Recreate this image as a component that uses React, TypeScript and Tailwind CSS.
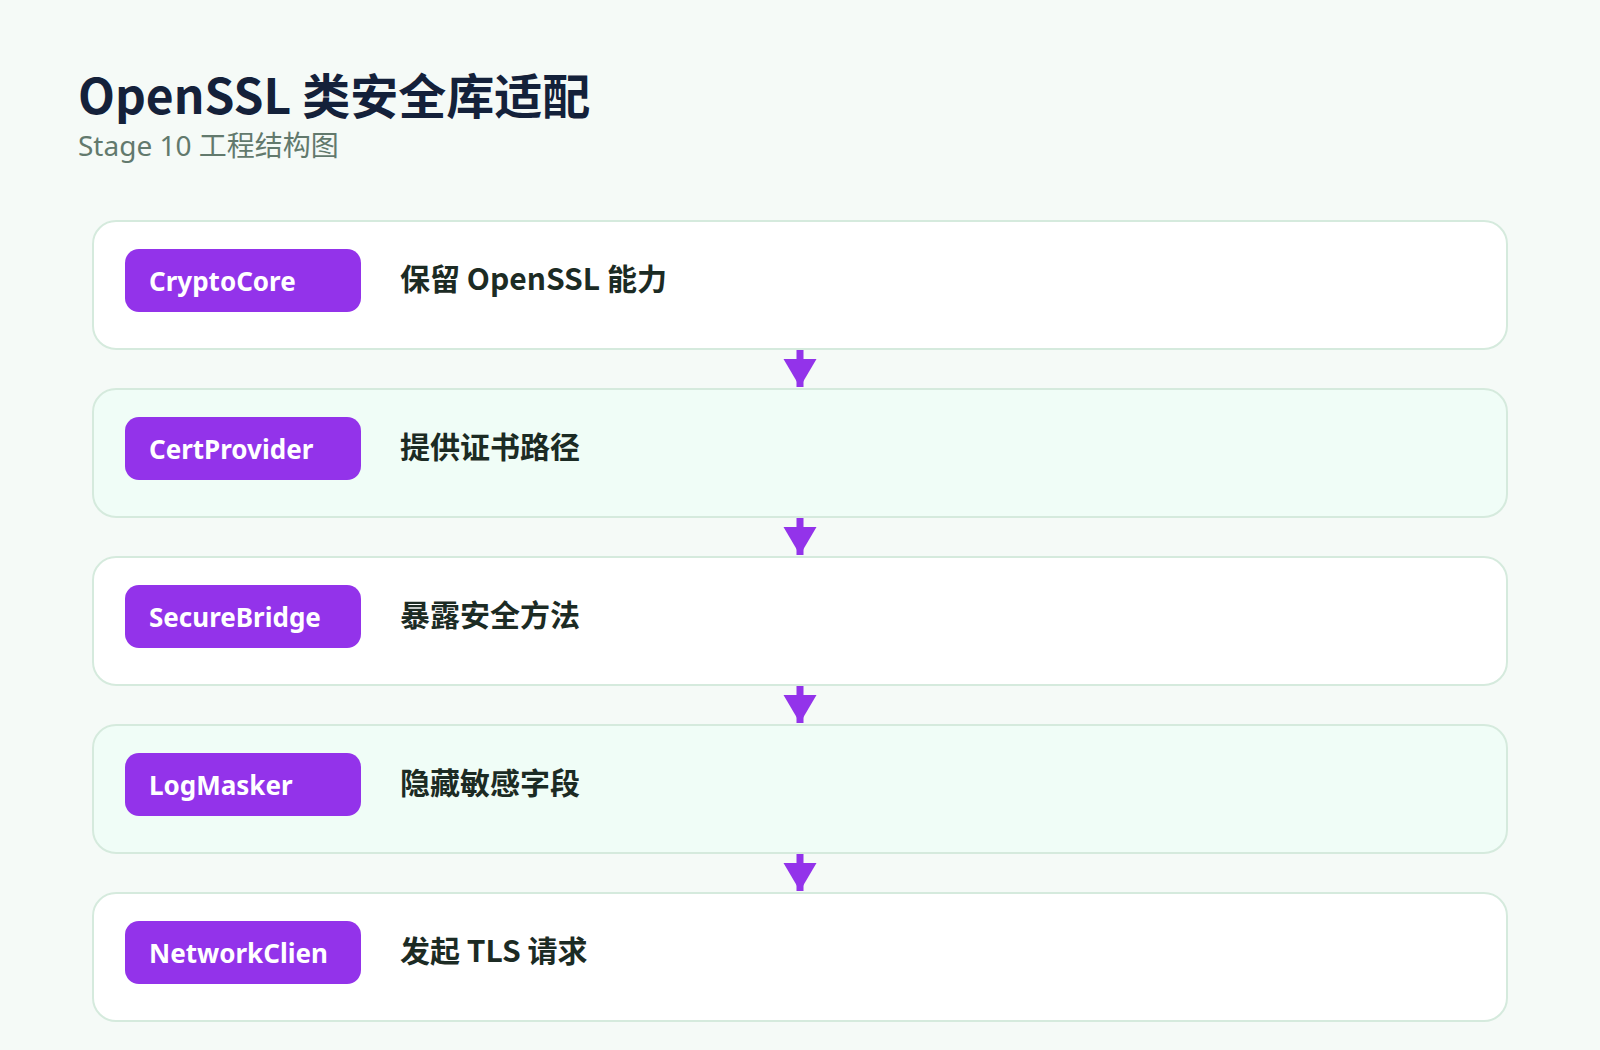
const steps = [
  { name: "CryptoCore", desc: "保留 OpenSSL 能力" },
  { name: "CertProvider", desc: "提供证书路径" },
  { name: "SecureBridge", desc: "暴露安全方法" },
  { name: "LogMasker", desc: "隐藏敏感字段" },
  { name: "NetworkClien", desc: "发起 TLS 请求" },
];

function Arrow() {
  return (
    <svg width="40" height="38" viewBox="0 0 40 38" className="mx-auto block">
      <rect x="16.5" y="0" width="7" height="37" fill="#9333ea" />
      <polygon points="3.5,9 36.5,9 20,37" fill="#9333ea" />
    </svg>
  );
}

export default function App() {
  return (
    <div className="min-h-screen bg-[#f5faf7] font-['Noto_Sans_CJK_SC','Noto_Sans',sans-serif]">
      <div className="px-[78px] pt-[61px]">
        <h1 className="text-[48px] font-bold leading-[64px] text-[#14213a]">
          OpenSSL 类安全库适配
        </h1>
        <p className="font-['Noto_Sans','Noto_Sans_CJK_SC',sans-serif] text-[28px] leading-[40px] text-[#62796d]">
          Stage 10 工程结构图
        </p>
      </div>

      <div className="mx-auto mt-[55px] w-[1416px] pb-[30px]">
        {steps.map((step, i) => (
          <div key={step.name}>
            {i > 0 && <Arrow />}
            <div
              className={
                "flex h-[130px] items-start rounded-[24px] border-2 border-[#d5eadd] pl-[31px] pt-[27px] " +
                (i % 2 === 1 ? "bg-[#f0fdf7]" : "bg-white")
              }
            >
              <div className="flex h-[63px] w-[236px] shrink-0 items-center overflow-hidden whitespace-nowrap rounded-[14px] bg-[#9333ea] px-[24px] pt-[2px] font-['Noto_Sans','Noto_Sans_CJK_SC',sans-serif] text-[26px] font-bold leading-[61px] text-white">
                {step.name}
              </div>
              <div className="ml-[39px] mt-[8px] text-[30px] font-bold leading-[40px] text-[#1c2b24]">
                {step.desc}
              </div>
            </div>
          </div>
        ))}
      </div>
    </div>
  );
}
